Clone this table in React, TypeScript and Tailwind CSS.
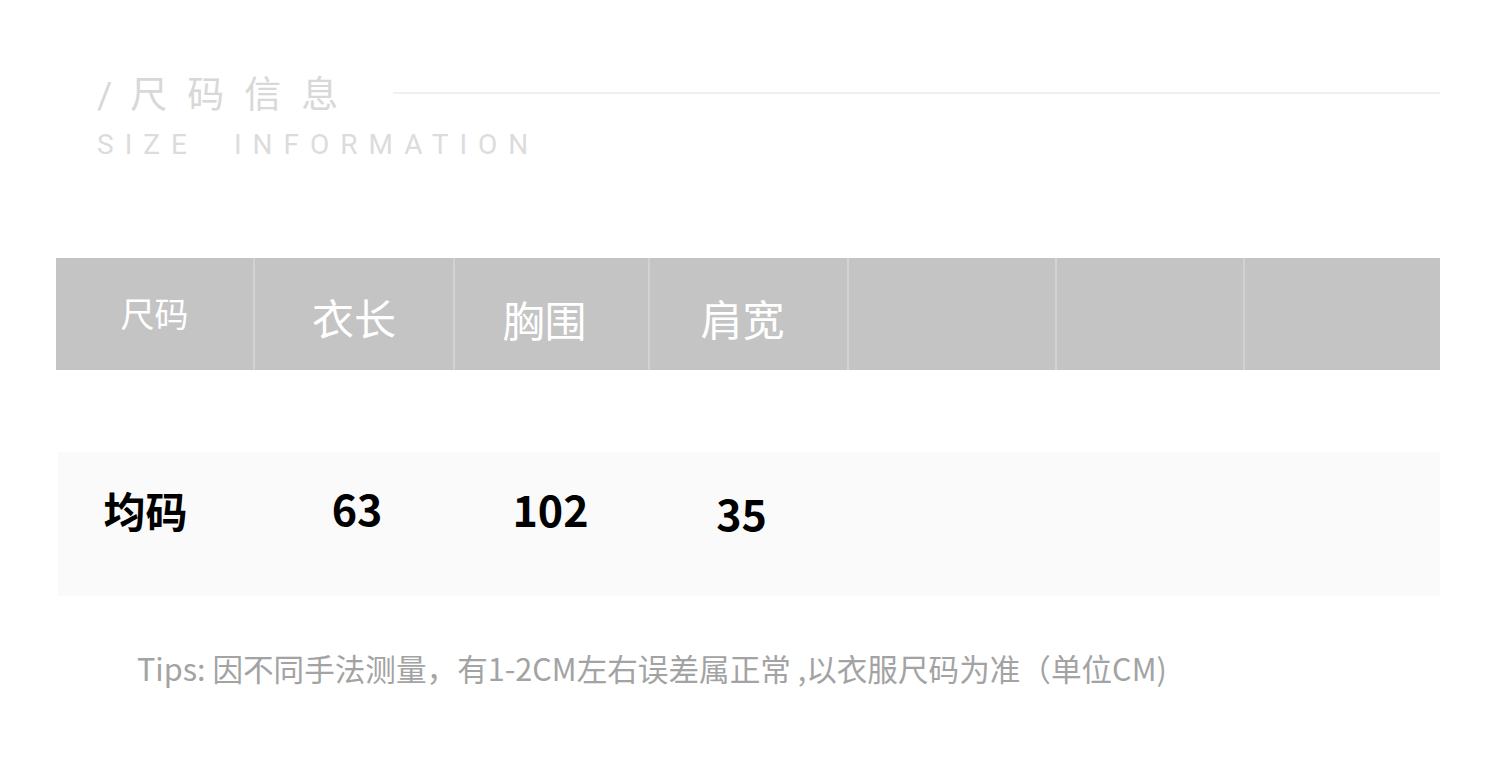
import React from "react";

const cjk = { fontFamily: '"Noto Sans CJK SC", "Noto Sans", sans-serif' };

const widths = [197, 200, 195, 199, 208, 188, 197];
const heads = ["尺码", "衣长", "胸围", "肩宽", "", "", ""];
const headPad = ["pb-[4px]", "pt-[4px]", "pt-[8px] pr-[14px]", "pt-[6px] pr-[12px]", "", "", ""];

export default function App() {
  return (
    <div className="w-[1500px] h-[780px] bg-white overflow-hidden" style={cjk}>
      {/* Title */}
      <div className="pt-[67px] pl-[97px] pr-[60px]">
        <div className="flex items-center">
          <div className="text-[37px] leading-[50px] text-[#d8d8d8] tracking-[20px] whitespace-nowrap">
            <span className="font-[Roboto] tracking-[18px]">/</span>尺码信息
          </div>
          <div className="flex-1 h-[2px] bg-[#f0f0f0] ml-[35px] mt-[-2px]" />
        </div>
        <div
          className="mt-[6px] text-[28px] leading-[36px] text-[#dcdcdc] tracking-[11px] whitespace-nowrap"
          style={{ fontFamily: "Roboto, sans-serif" }}
        >
          SIZE<span className="inline-block w-[36px]" />INFORMATION
        </div>
      </div>

      {/* Header */}
      <div className="ml-[56px] mt-[95px] flex h-[112px] bg-[#c4c4c4] w-[1384px]">
        {widths.map((w, i) => (
          <div
            key={i}
            className={`flex items-center justify-center text-white ${i > 0 ? "border-l-2 border-[#d2d2d2]" : ""} ${i === 0 ? "text-[34px]" : "text-[42px]"} ${headPad[i]}`}
            style={{ width: w }}
          >
            {heads[i]}
          </div>
        ))}
      </div>

      {/* Data row */}
      <div className="ml-[58px] mt-[82px] flex h-[144px] bg-[#fafafa] w-[1382px]">
        <div className="w-[195px] flex items-center justify-center pr-[20px] pb-[30px] text-[42px] font-bold text-black">均码</div>
        <div className="w-[200px] flex items-center justify-center pl-[8px] pb-[34px] text-[43px] font-bold text-black">63</div>
        <div className="w-[195px] flex items-center justify-center pb-[32px] text-[43px] font-bold text-black">102</div>
        <div className="w-[199px] flex items-center justify-center pr-[12px] pb-[24px] text-[43px] font-bold text-black">35</div>
      </div>

      {/* Tips */}
      <div className="mt-[52px] pl-[137px] text-[30.6px] leading-[40px] text-[#a3a3a3] whitespace-nowrap">
        Tips: 因不同手法测量，有1-2CM左右误差属正常 ,以衣服尺码为准（单位CM)
      </div>
    </div>
  );
}
